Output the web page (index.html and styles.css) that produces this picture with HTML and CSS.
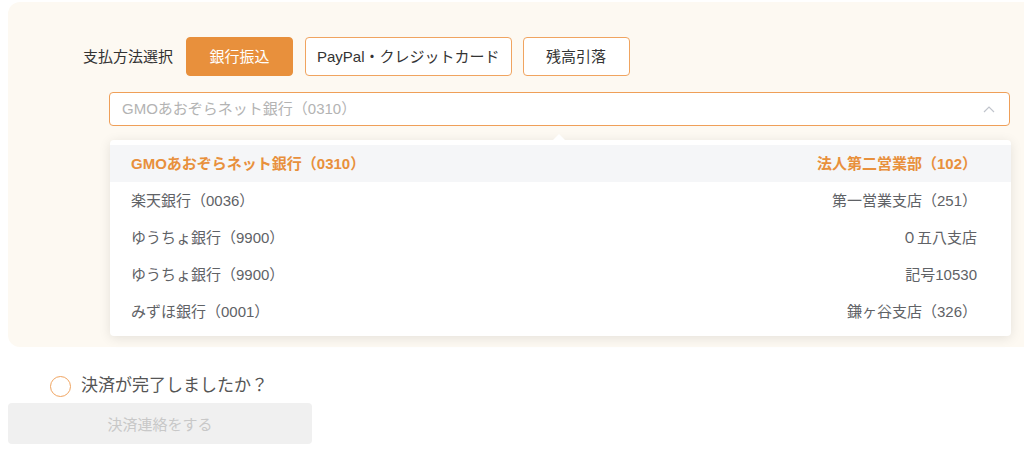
FILE: index.html
```html
<!DOCTYPE html>
<html lang="ja">
<head>
<meta charset="utf-8">
<title>決済</title>
<link rel="stylesheet" href="styles.css">
</head>
<body>
<div class="page">
  <section class="panel">
    <div class="method-row">
      <span class="method-label">支払方法選択</span>
      <button class="method-btn active">銀行振込</button>
      <button class="method-btn">PayPal・クレジットカード</button>
      <button class="method-btn">残高引落</button>
    </div>
    <div class="select-wrap">
      <div class="select">
        <span class="placeholder">GMOあおぞらネット銀行（0310）</span>
        <svg class="chevron" width="12" height="7" viewBox="0 0 12 7"><polyline points="1,6 6,1 11,6" fill="none" stroke="#c0c4cc" stroke-width="1.2"/></svg>
      </div>
      <div class="dropdown">
        <span class="caret"></span>
        <ul class="options">
          <li class="option selected"><span>GMOあおぞらネット銀行（0310）</span><span>法人第二営業部（102）</span></li>
          <li class="option"><span>楽天銀行（0036）</span><span>第一営業支店（251）</span></li>
          <li class="option"><span>ゆうちょ銀行（9900）</span><span>０五八支店</span></li>
          <li class="option"><span>ゆうちょ銀行（9900）</span><span>記号10530</span></li>
          <li class="option"><span>みずほ銀行（0001）</span><span>鎌ヶ谷支店（326）</span></li>
        </ul>
      </div>
    </div>
  </section>
  <label class="confirm">
    <span class="radio"></span>
    <span class="confirm-text">決済が完了しましたか？</span>
  </label>
  <button class="submit" disabled>決済連絡をする</button>
</div>
</body>
</html>
```

FILE: styles.css
```css
html, body {
  margin: 0;
  padding: 0;
  overflow: hidden;
  background: #ffffff;
}
body {
  font-family: "Liberation Sans", "Noto Sans CJK JP", sans-serif;
  color: #333;
}
.page {
  padding-left: 8px;
  padding-top: 2px;
}
.panel {
  background: #fdf9f2;
  border-radius: 12px;
  margin-right: -20px;
  height: 345px;
  box-sizing: border-box;
  padding: 35px 0 0 75px;
}
.method-row {
  display: flex;
  align-items: center;
  height: 39px;
}
.method-label {
  font-size: 15px;
  color: #333;
  margin-right: 13px;
  line-height: 20px;
}
.method-btn {
  font-family: inherit;
  height: 39px;
  min-width: 107px;
  padding: 0 11px;
  margin-right: 11px;
  box-sizing: border-box;
  border: 1px solid #f0a460;
  border-radius: 4px;
  background: #ffffff;
  color: #333;
  font-size: 15px;
  line-height: 20px;
  cursor: pointer;
}
.method-btn.active {
  background: #e8903c;
  border-color: #e8903c;
  color: #ffffff;
  margin-right: 12px;
}
.select-wrap {
  position: relative;
  margin-top: 16px;
  margin-left: 26px;
  width: 901px;
}
.select {
  height: 34px;
  box-sizing: border-box;
  border: 1px solid #ef9f58;
  border-radius: 4px;
  background: #ffffff;
  display: flex;
  align-items: center;
  justify-content: space-between;
  padding: 0 14px 0 12px;
}
.placeholder {
  font-size: 15px;
  color: #b3b3b3;
  line-height: 20px;
}
.chevron {
  display: block;
}
.dropdown {
  position: absolute;
  top: 48px;
  left: 1px;
  width: 901px;
  background: #ffffff;
  border-radius: 4px;
  box-shadow: 0 2px 12px rgba(0, 0, 0, 0.1);
  padding: 5px 0 6px;
  z-index: 10;
}
.caret {
  position: absolute;
  top: -6px;
  left: 443px;
  width: 0;
  height: 0;
  border-left: 6px solid transparent;
  border-right: 6px solid transparent;
  border-bottom: 6px solid #ffffff;
}
.options {
  list-style: none;
  margin: 0;
  padding: 0;
}
.option {
  display: flex;
  justify-content: space-between;
  align-items: center;
  height: 37px;
  padding: 0 34px 0 21px;
  font-size: 15px;
  line-height: 20px;
  color: #606266;
}
.option.selected {
  background: #f5f6f8;
  color: #e8903c;
  font-weight: bold;
}
.confirm {
  display: flex;
  align-items: center;
  margin-top: 28px;
  margin-left: 42px;
  height: 22px;
}
.radio {
  width: 21px;
  height: 21px;
  box-sizing: border-box;
  border: 1.5px solid #f0a460;
  border-radius: 50%;
  background: #ffffff;
  margin-right: 10px;
}
.confirm-text {
  font-size: 17px;
  color: #555;
  line-height: 22px;
}
.submit {
  display: block;
  margin-top: 6px;
  width: 304px;
  height: 41px;
  border: none;
  border-radius: 4px;
  background: #f0f0f0;
  color: #c8c8c8;
  font-family: inherit;
  font-size: 15px;
}
```
